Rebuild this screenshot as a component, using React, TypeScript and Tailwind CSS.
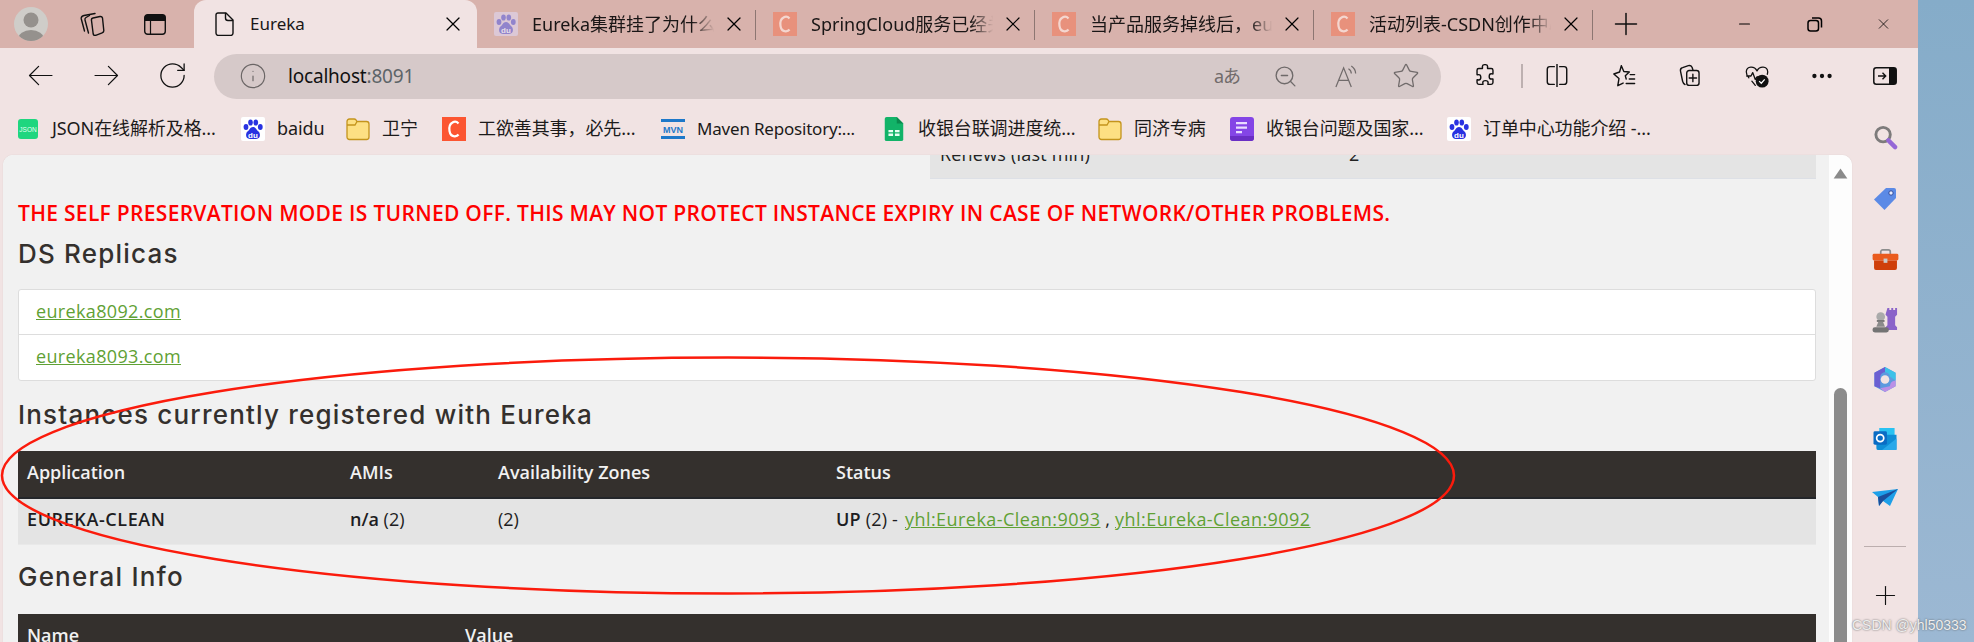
import React from "react";
import { RotateCw, Info, X, Plus, ZoomOut, Star, Minus, MoreHorizontal } from "lucide-react";

const UI = { fontFamily: '"Noto Sans","Noto Sans CJK SC",sans-serif' };
const PAGE = { fontFamily: '"Open Sans","Noto Sans CJK SC",sans-serif' };
const HEAD = { fontFamily: 'Inter,"Open Sans",sans-serif' };

function Paw({ faded }: { faded?: boolean }) {
  const c = faded ? "#9184cc" : "#2932e1";
  return (
    <svg viewBox="0 0 24 24" className="w-6 h-6 shrink-0">
      <rect width="24" height="24" rx="2" fill={faded ? "#dcc8d6" : "#ffffff"} />
      <ellipse cx="5" cy="10" rx="2.4" ry="3" fill={c} />
      <ellipse cx="9.5" cy="5.5" rx="2.3" ry="3.1" fill={c} />
      <ellipse cx="14.8" cy="5.5" rx="2.3" ry="3.1" fill={c} />
      <ellipse cx="19.3" cy="10" rx="2.4" ry="3" fill={c} />
      <path d="M12 10c-3 0-3.5 3-5.500 4.500C4.500 16 4 22 9 22h6c5 0 4.500-6 2.500-7.500C15.500 13 15 10 12 10z" fill={c} />
      <text x="12" y="20.500" fontSize="8" fontWeight="700" textAnchor="middle" fill={faded ? "#e8dfe8" : "#fff"} fontFamily="Liberation Sans">du</text>
    </svg>
  );
}

function CIcon({ faded }: { faded?: boolean }) {
  return (
    <svg viewBox="0 0 24 24" className="w-6 h-6 shrink-0">
      <rect width="24" height="24" fill={faded ? "#e8917c" : "#fc5531"} />
      <path d="M16.500 6.500C15 4.800 12.500 4.300 10.500 5.500 7.500 7.200 7 11 7.500 14c.5 3 2.500 5.500 5.500 5.300 1.500-.1 2.700-.7 3.500-1.800" fill="none" stroke={faded ? "#f4d6cf" : "#fff"} strokeWidth="2.200" />
    </svg>
  );
}

function Folder() {
  return (
    <svg viewBox="0 0 24 24" className="w-6 h-6 shrink-0">
      <path d="M1 4.500C1 3 2 2 3.500 2h4.700c.8 0 1.300.3 1.800.9L11 4.500h9.500C22 4.500 23 5.500 23 7v13c0 1.500-1 2.500-2.500 2.500h-17C2 22.500 1 21.500 1 20z" fill="#fde083" stroke="#c4941c" strokeWidth="1.300" />
      <path d="M1 8h8l2-3.500" fill="none" stroke="#c4941c" strokeWidth="1.300" />
    </svg>
  );
}

function Bookmark({ icon, label, w, tight }: { icon: React.ReactNode; label: string; w: number; tight?: boolean }) {
  return (
    <div className="flex items-center shrink-0" style={{ width: w }}>
      <span className="flex w-6 h-6 items-center justify-center shrink-0">{icon}</span>
      <span className={tight ? "ml-[12px] text-[17px] tracking-[-0.2px] text-[#1c1a1a] whitespace-nowrap" : "ml-[12px] text-[18px] tracking-[-0.1px] text-[#1c1a1a] whitespace-nowrap"}>{label}</span>
    </div>
  );
}

function Tab({ icon, label }: { icon: React.ReactNode; label: string }) {
  return (
    <div className="flex items-center w-[279px] h-full shrink-0 pl-[17px] relative">
      <span className="flex w-6 h-6 items-center justify-center shrink-0">{icon}</span>
      <span className="ml-[14px] w-[186px] overflow-hidden whitespace-nowrap text-[18px] text-[#1a1616] [mask-image:linear-gradient(to_right,black_86%,transparent_98%)]">{label}</span>
      <span className="ml-[4px] w-[24px] h-[24px] flex items-center justify-center shrink-0"><X className="w-[24px] h-[24px] text-black" strokeWidth={1.200} /></span>
      <span className="absolute right-0 top-[10px] h-[30px] w-px bg-[#8d7672]" />
    </div>
  );
}

function Slot({ w, children }: { w: number; children: React.ReactNode }) {
  return <div className="flex items-center justify-center shrink-0 h-full" style={{ width: w }}>{children}</div>;
}

const stroke = { fill: "none", stroke: "#111", strokeWidth: 1.400, strokeLinecap: "round", strokeLinejoin: "round" } as const;

export default function App() {
  return (
    <div className="flex w-[1974px] h-[642px] overflow-hidden relative" style={UI}>
      <div className="w-[1918px] h-full flex flex-col bg-[#f1e3e3] shrink-0">
        {/* tab strip */}
        <div className="h-[48px] flex bg-[#d8b2ac] shrink-0 items-stretch">
          <Slot w={62}>
            <svg viewBox="0 0 34 34" className="w-[34px] h-[34px]">
              <defs><clipPath id="av"><circle cx="17" cy="17" r="17" /></clipPath></defs>
              <circle cx="17" cy="17" r="17" fill="#cfcdc9" />
              <g clipPath="url(#av)" fill="#95918d">
                <circle cx="17" cy="13" r="7.500" />
                <ellipse cx="17" cy="32" rx="13" ry="9" />
              </g>
            </svg>
          </Slot>
          <Slot w={60}>
            <svg viewBox="0 0 25 24" className="w-[25px] h-[24px]" {...stroke}>
              <path d="M11.500 8.500c-.3-1.200.3-2.200 1.500-2.500l7-1.500c1.200-.2 2.200.4 2.500 1.500l1.300 12.500c.1 1.200-.5 2-1.600 2.300l-6.500 2.500c-1.200.3-2.200-.2-2.500-1.300z" />
              <path d="M9.500 3.500 6 5.500c-1 .6-1.300 1.500-1 2.500l3.500 13" />
              <path d="M15 1.500 4 3.500C2 4 1 5.500 1.300 7l3.200 12" />
            </svg>
          </Slot>
          <Slot w={66}>
            <svg viewBox="0 0 22 21" className="w-[22px] h-[21px]">
              <rect x="0.700" y="0.700" width="20.600" height="19.600" rx="3" fill="none" stroke="#111" strokeWidth="1.400" />
              <path d="M0.700 3.700a3 3 0 0 1 3-3h14.600a3 3 0 0 1 3 3V7H0.700z" fill="#111" />
              <path d="M6.500 7v13" stroke="#111" strokeWidth="1.200" />
            </svg>
          </Slot>
          <div className="w-[6px]" />
          <div className="w-[283px] bg-[#f1e3e3] rounded-t-[12px] flex items-center pl-[21px] shrink-0">
            <svg viewBox="0 0 19 24" className="w-[19px] h-[24px]" {...stroke}>
              <path d="M3 1h8L18 8v13a2.500 2.500 0 0 1-2.500 2.500h-12A2.500 2.500 0 0 1 1 21V3a2 2 0 0 1 2-2z" />
              <path d="M10.500 1.500V6A2.500 2.500 0 0 0 13 8.500h4.500" />
            </svg>
            <span className="ml-[16px] text-[17px] text-[#1a1616] w-[191px]">Eureka</span>
            <span className="w-[24px] h-[24px] flex items-center justify-center shrink-0"><X className="w-[24px] h-[24px] text-black" strokeWidth={1.200} /></span>
          </div>
          <Tab icon={<Paw faded />} label="Eureka集群挂了为什么服" />
          <Tab icon={<CIcon faded />} label="SpringCloud服务已经关" />
          <Tab icon={<CIcon faded />} label="当产品服务掉线后，eu" />
          <Tab icon={<CIcon faded />} label="活动列表-CSDN创作中心" />
          <Slot w={66}><Plus className="w-[36px] h-[36px] text-[#111]" strokeWidth={1} /></Slot>
          <div className="w-[77px]" />
          <Slot w={17}><Minus className="w-[26px] h-[26px] text-black" strokeWidth={1.600} /></Slot>
          <div className="w-[53px]" />
          <Slot w={17}>
            <svg viewBox="0 0 16 15" className="w-[16px] h-[15px]" fill="none" stroke="#000" strokeWidth="1.500">
              <rect x="1" y="3.500" width="10.500" height="10.500" rx="2.500" />
              <path d="M5 1h6.500a3 3 0 0 1 3 3v6.500" />
            </svg>
          </Slot>
          <div className="w-[52px]" />
          <Slot w={17}><X className="w-[30px] h-[30px] text-black" strokeWidth={1.100} /></Slot>
        </div>

        {/* toolbar */}
        <div className="h-[57px] flex items-center shrink-0 pb-[2px] pl-[7px]">
          <Slot w={66}>
            <svg viewBox="0 0 26 22" className="w-[25px] h-[21px]" fill="none" stroke="#111" strokeWidth="1.300" strokeLinecap="round" strokeLinejoin="round"><path d="M25 11H1.500M11 1.500 1.500 11l9.500 9.500" /></svg>
          </Slot>
          <Slot w={66}>
            <svg viewBox="0 0 26 22" className="w-[25px] h-[21px]" fill="none" stroke="#111" strokeWidth="1.300" strokeLinecap="round" strokeLinejoin="round"><path d="M1 11h23.500M15 1.500l9.500 9.500-9.500 9.500" /></svg>
          </Slot>
          <Slot w={66}><RotateCw className="w-[31px] h-[31px] text-[#111]" strokeWidth={1} /></Slot>
          <div className="w-[9px]" />
          <div className="w-[1227px] h-[45px] rounded-full bg-[#d6c9c9] flex items-center shrink-0 mt-[1px]">
            <div className="w-[25px]" />
            <Info className="w-[28px] h-[28px] text-[#6a6565]" strokeWidth={1} />
            <span className="ml-[21px] text-[19px] text-[#111] w-[921px] tracking-[-0.2px]">localhost<span className="text-[#5d6468]">:8091</span></span>
            <span className="text-[18px] text-[#716b6b] w-[36px] text-center tracking-[-1px]">aあ</span>
            <div className="w-[28px]" />
            <ZoomOut className="w-[25px] h-[25px] text-[#6f6a6a]" strokeWidth={1.300} />
            <div className="w-[36px]" />
            <svg viewBox="0 0 26 26" className="w-[25px] h-[25px]" fill="none" stroke="#716b6b" strokeWidth="1.300">
              <path d="M2 24 10 4l8 20M5 17h10" />
              <path d="M15 5c2 1 3 2.500 3 5M18 2c3 2 4.500 4.500 4.500 8" />
            </svg>
            <div className="w-[33px]" />
            <Star className="w-[28px] h-[28px] text-[#716b6b]" strokeWidth={1.100} />
          </div>
          <div className="w-[28px]" />
          <Slot w={32}>
            <svg viewBox="0 0 24 26" className="w-[22px] h-[23px]" {...stroke} strokeWidth={1.600}>
              <path d="M9 3c0-3 6-3 6 0 0 1-.5 1.500 0 2h4c1 0 2 1 2 2v4c0 .5-1 0-2 0-3 0-3 6 0 6 1 0 2-.5 2 0v4c0 1-1 2-2 2h-3.500c-.5 0 0-1 0-2 0-3-6-3-6 0 0 1 .5 2 0 2H5c-1 0-2-1-2-2v-3c0-.5 1 0 2 0 3 0 3-6 0-6-1 0-2 .5-2 0V7c0-1 1-2 2-2h4c.5-.5 0-1 0-2z" />
            </svg>
          </Slot>
          <div className="w-[42px] flex justify-center"><span className="w-[2px] h-[24px] bg-[#bdb0b0]" /></div>
          <Slot w={28}>
            <svg viewBox="0 0 24 26" className="w-[22px] h-[23px]" {...stroke} strokeWidth={1.600}>
              <path d="M9 3H4a3 3 0 0 0-3 3v14a3 3 0 0 0 3 3h5M15 3h5a3 3 0 0 1 3 3v14a3 3 0 0 1-3 3h-5M12 0v26" />
            </svg>
          </Slot>
          <Slot w={106}>
            <svg viewBox="0 0 26 26" className="w-[24px] h-[23px]" {...stroke} strokeWidth={1.600}>
              <path d="m10 2 2.800 6.500 6.200.6-4.500 4.300 1 3.500M6 24.500 7.300 16.500 1.500 11.300 8 9 10 2M6 24.500l6-3" />
              <path d="M20 12h5M19 17h6M15.500 22h9.500" />
            </svg>
          </Slot>
          <Slot w={26}>
            <svg viewBox="0 0 26 28" className="w-[24px] h-[23px]" {...stroke} strokeWidth={1.700}>
              <path d="M7 25C5 24 4.500 23 4 21L1.500 9C1 7 2 5 4 4.500l7-2.500c2-.5 3.500 0 4.500 2l1 3" />
              <rect x="9" y="8" width="15" height="18" rx="3" />
              <path d="M16.500 12.500v9M12 17h9" />
            </svg>
          </Slot>
          <Slot w={108}>
            <svg viewBox="0 0 28 28" className="w-[26px] h-[24px]">
              <path d="M14 8C11 2 2 2 1.500 9c0 3 1 5 3 7M14 8c3-6 12-6 12.500 1 0 1-.2 2-.5 3M2 14h5l2-4 3 8 2-3h2M8 20l4 5" fill="none" stroke="#111" strokeWidth="1.500" strokeLinecap="round" strokeLinejoin="round" />
              <circle cx="20" cy="20" r="7.500" fill="#111" />
              <path d="m16.500 20 2.500 2.500 4-4.500" fill="none" stroke="#fff" strokeWidth="1.500" />
            </svg>
          </Slot>
          <Slot w={22}><MoreHorizontal className="w-[26px] h-[26px] text-[#111] shrink-0" strokeWidth={2} /></Slot>
          <div className="w-[40px]" />
          <svg viewBox="0 0 24 18" className="w-[24px] h-[18px] shrink-0">
            <rect x="0.800" y="0.800" width="22.400" height="16.400" rx="2.500" fill="none" stroke="#111" strokeWidth="1.500" />
            <path d="M16 0.800h4.700a2.500 2.500 0 0 1 2.500 2.500v11.400a2.500 2.500 0 0 1-2.500 2.500H16z" fill="#111" />
            <path d="M5 9h7.500M9.500 5.800 12.700 9l-3.200 3.200" fill="none" stroke="#111" strokeWidth="1.400" />
          </svg>
        </div>

        <div className="flex-1 flex min-h-0">
          <div className="w-[1852px] flex flex-col shrink-0">
            {/* bookmarks */}
            <div className="h-[50px] flex items-center pl-[16px] shrink-0 pb-[3px]">
              <Bookmark w={225} label="JSON在线解析及格..." icon={
                <svg viewBox="0 0 20 20" className="w-5 h-5"><rect width="20" height="20" rx="3" fill="#1fd67f" /><text x="10" y="13" fontSize="6.500" textAnchor="middle" fill="#e5fff2" fontFamily="Liberation Sans">JSON</text></svg>} />
              <Bookmark w={105} label="baidu" icon={<Paw />} />
              <Bookmark w={96} label="卫宁" icon={<Folder />} />
              <Bookmark w={219} label="工欲善其事，必先..." icon={<CIcon />} />
              <Bookmark w={221} tight label="Maven Repository:..." icon={
                <svg viewBox="0 0 24 24" className="w-6 h-6"><rect y="2" width="24" height="3" fill="#1d78c9" /><rect y="19" width="24" height="3" fill="#1d78c9" /><text x="12" y="16" fontSize="9" fontWeight="700" textAnchor="middle" fill="#1d78c9" fontFamily="Liberation Sans">MVN</text></svg>} />
              <Bookmark w={216} label="收银台联调进度统..." icon={
                <svg viewBox="0 0 20 26" className="w-5 h-6"><path d="M2 0h11l7 7v17a2 2 0 0 1-2 2H2a2 2 0 0 1-2-2V2a2 2 0 0 1 2-2z" fill="#12b368" /><path d="M13 0l7 7h-7z" fill="#0a8a4e" /><path d="M4 14h5v2.500H4zM11 14h5v2.500h-5zM4 18h5v2.500H4zM11 18h5v2.500h-5z" fill="#e6fff2" /></svg>} />
              <Bookmark w={132} label="同济专病" icon={<Folder />} />
              <Bookmark w={217} label="收银台问题及国家..." icon={
                <svg viewBox="0 0 24 24" className="w-6 h-6"><rect width="24" height="24" rx="3" fill="#8445e6" /><path d="M0 19h24v2a3 3 0 0 1-3 3H3a3 3 0 0 1-3-3z" fill="#6a2fc4" /><path d="M6 5h11v2.200H6zM6 9.500h11v2.200H6zM6 14h6v2.200H6z" fill="#e9dcff" /></svg>} />
              <Bookmark w={205} label="订单中心功能介绍 -..." icon={<Paw />} />
            </div>

            {/* page */}
            <div className="flex-1 min-h-0 flex ml-[3px] rounded-t-[10px] overflow-hidden bg-white shadow-[0_0_1px_#c9bcbc]">
              <div className="w-[1826px] shrink-0 bg-[#f1f1f1] pl-[15px] pr-[13px] text-[#1c1c1c]" style={PAGE}>
                <div className="h-[24px] ml-[912px] bg-[#e4e4e4] flex overflow-hidden border-b border-[#dde0e6] text-[18px] tracking-[0.2px] text-[#222] leading-[24px]">
                  <span className="ml-[10px] w-[409px] -mt-[13px]">Renews (last min)</span>
                  <span className="-mt-[13px]">2</span>
                </div>
                <p className="mt-[22px] h-[24px] text-[21px] leading-[24px] font-semibold text-[#ff0000] whitespace-nowrap tracking-[0.3px]">THE SELF PRESERVATION MODE IS TURNED OFF. THIS MAY NOT PROTECT INSTANCE EXPIRY IN CASE OF NETWORK/OTHER PROBLEMS.</p>
                <h2 className="mt-[13px] h-[32px] text-[26px] leading-[32px] font-medium text-[#34302d] tracking-[1.2px]" style={HEAD}>DS Replicas</h2>
                <ul className="mt-[19px] h-[92px] bg-white rounded-[3px] border border-[#dddddd] text-[18px] tracking-[0.35px]">
                  <li className="h-[45px] pl-[17px] pb-[2px] flex items-center border-b border-[#dddddd]"><a className="text-[#5fa134] underline">eureka8092.com</a></li>
                  <li className="h-[45px] pl-[17px] pb-[2px] flex items-center"><a className="text-[#5fa134] underline">eureka8093.com</a></li>
                </ul>
                <h2 className="mt-[18px] h-[32px] text-[26px] leading-[32px] font-medium text-[#34302d] whitespace-nowrap tracking-[1.2px]" style={HEAD}>Instances currently registered with Eureka</h2>
                <table className="mt-[20px] w-full table-fixed border-collapse text-[18px]">
                  <colgroup>
                    <col className="w-[323px]" />
                    <col className="w-[148px]" />
                    <col className="w-[338px]" />
                    <col />
                  </colgroup>
                  <thead>
                    <tr className="h-[47px] bg-[#34302d] border-b-2 border-[#24262a] text-[#f1f1f1] text-left">
                      <th className="pl-[9px] pb-[3px] font-semibold">Application</th>
                      <th className="pl-[9px] pb-[3px] font-semibold">AMIs</th>
                      <th className="pl-[9px] pb-[3px] font-semibold">Availability Zones</th>
                      <th className="pl-[9px] pb-[3px] font-semibold">Status</th>
                    </tr>
                  </thead>
                  <tbody>
                    <tr className="h-[46px] bg-[#e4e4e4] border-b border-[#e9e9e9] text-[#1d1d22]">
                      <td className="pl-[9px] pb-[3px] font-semibold tracking-[0.6px]">EUREKA-CLEAN</td>
                      <td className="pl-[9px] pb-[3px]"><b className="font-semibold">n/a</b> (2)</td>
                      <td className="pl-[9px] pb-[3px]">(2)</td>
                      <td className="pl-[9px] pb-[3px] whitespace-nowrap tracking-[0.2px]"><b className="font-semibold">UP</b> (2) - <a className="ml-[2px] text-[#5fa134] underline tracking-[0.45px]">yhl:Eureka-Clean:9093</a> , <a className="text-[#5fa134] underline tracking-[0.45px]">yhl:Eureka-Clean:9092</a></td>
                    </tr>
                  </tbody>
                </table>
                <h2 className="mt-[16px] h-[32px] text-[26px] leading-[32px] font-medium text-[#34302d] tracking-[1.2px]" style={HEAD}>General Info</h2>
                <table className="mt-[21px] w-full table-fixed border-collapse text-[18px]">
                  <colgroup>
                    <col className="w-[438px]" />
                    <col />
                  </colgroup>
                  <thead>
                    <tr className="h-[47px] bg-[#34302d] text-[#f1f1f1] text-left">
                      <th className="pl-[9px] pb-[3px] font-semibold">Name</th>
                      <th className="pl-[9px] pb-[3px] font-semibold">Value</th>
                    </tr>
                  </thead>
                </table>
              </div>
              {/* scrollbar */}
              <div className="flex-1 bg-[#fdfdfd] flex flex-col items-center pt-[13px]">
                <svg viewBox="0 0 16 12" className="w-[15px] h-[11px] shrink-0"><path d="M8 0.500 15.500 11.500H0.500z" fill="#8a8a8a" /></svg>
                <div className="mt-[209px] w-[13px] flex-1 rounded-t-full bg-[#8c8c8c]" />
              </div>
            </div>
          </div>

          {/* sidebar */}
          <div className="flex-1 flex flex-col items-center">
            <div className="h-[45px] flex items-end shrink-0">
              <svg viewBox="0 0 26 26" className="w-[25px] h-[25px]">
                <circle cx="10.500" cy="10" r="7.500" fill="none" stroke="#7d7b7b" strokeWidth="3" />
                <path d="m16 16 7 7" stroke="#9567d6" strokeWidth="4.500" strokeLinecap="round" />
              </svg>
            </div>
            <div className="mt-[37px]">
              <svg viewBox="0 0 24 24" className="w-[24px] h-[24px] block">
                <path d="M13 1h8a2 2 0 0 1 2 2v8L11.500 23 1 12.500z" fill="#5b8ae6" />
                <circle cx="18" cy="6" r="2.200" fill="#e6ecff" stroke="#2f4a9c" strokeWidth="1" />
              </svg>
            </div>
            <div className="mt-[38px]">
              <svg viewBox="0 0 28 22" className="w-[27px] h-[21px] block">
                <path d="M9 6V3a2 2 0 0 1 2-2h6a2 2 0 0 1 2 2v3" fill="none" stroke="#8d8d8d" strokeWidth="1.800" />
                <rect x="0.500" y="5" width="27" height="7" rx="1.500" fill="#ea5b1d" />
                <path d="M2 12h24v8a2 2 0 0 1-2 2H4a2 2 0 0 1-2-2z" fill="#cf3f0b" />
                <rect x="12" y="10" width="4" height="4.500" fill="#c9c9c9" />
              </svg>
            </div>
            <div className="mt-[37px]">
              <svg viewBox="0 0 28 27" className="w-[27px] h-[26px] block">
                <path d="M17 1h2v2h2V1h2v2h2V1h2v7l-2 2v9l2 2v3H15v-3l2-2v-9l-2-2z" fill="#8a63c9" transform="translate(-1 0)" />
                <circle cx="9" cy="10" r="4.500" fill="#aaaaaa" />
                <rect x="5" y="13.500" width="8" height="2" fill="#777" />
                <path d="M6.500 15.500h5l2 5h-9z" fill="#8b8b8b" />
                <rect x="0.500" y="21" width="17" height="5.500" rx="2.500" fill="#747474" />
              </svg>
            </div>
            <div className="mt-[34px]">
              <svg viewBox="0 0 24 26" className="w-[24px] h-[25px] block">
                <path d="M12 0 23 6v14l-11 6L1 20V6z" fill="#5d9adf" />
                <path d="M12 0 23 6v8l-6-4c0-2-2-4.500-5-4.500z" fill="#3cc1e8" />
                <path d="M1 6 12 0v5.500C9 5.500 7 8 7 10.500V22l-6-2z" fill="#6b5fd2" />
                <path d="M23 14v6l-11 6-5-4 10-2c1-2 0-5 6-6z" fill="#bb8fe6" />
                <circle cx="12" cy="13" r="4.500" fill="#f1e3e3" />
              </svg>
            </div>
            <div className="mt-[36px]">
              <svg viewBox="0 0 24 24" className="w-[24px] h-[23px] block">
                <path d="M6 0h16v12H6z" fill="#29c2f2" />
                <path d="M3 7h21v15a1 1 0 0 1-1 1H5a2 2 0 0 1-2-2z" fill="#0f8ed6" />
                <path d="M24 11v12H9z" fill="#28a8ea" />
                <rect y="3.500" width="14" height="14" rx="1.500" fill="#0a6cc4" />
                <circle cx="7" cy="10.500" r="3.700" fill="none" stroke="#fff" strokeWidth="1.800" />
              </svg>
            </div>
            <div className="mt-[38px]">
              <svg viewBox="0 0 26 18" className="w-[26px] h-[18px] block">
                <path d="M0 3 26 0 18 17l-7-5-4 5-1-9z" fill="#1d9fe8" />
                <path d="M6 8 26 0 11 12l-4 5z" fill="#1b4e9b" />
              </svg>
            </div>
            <div className="mt-[39px] w-[42px] h-px bg-[#bcaeae] shrink-0" />
            <Plus className="mt-[33px] w-[31px] h-[31px] text-[#111] shrink-0" strokeWidth={0.900} />
          </div>
        </div>
      </div>

      <div className="flex-1 bg-gradient-to-b from-[#85acc9] to-[#9cb8d3]" />

      {/* hand-drawn annotation */}
      <svg className="absolute left-0 top-0 pointer-events-none" width="1974" height="642" viewBox="0 0 1974 642">
        <ellipse cx="728" cy="475.500" rx="726" ry="118" fill="none" stroke="#fb1b0c" strokeWidth="2.500" />
      </svg>

      {/* watermark */}
      <span className="absolute left-[1852px] top-[615px] text-[14px] leading-[20px] text-[#eeeeee] whitespace-nowrap [text-shadow:0_0_2px_#555]" style={{ fontFamily: '"Liberation Sans",sans-serif' }}>CSDN @yhl50333</span>
    </div>
  );
}
